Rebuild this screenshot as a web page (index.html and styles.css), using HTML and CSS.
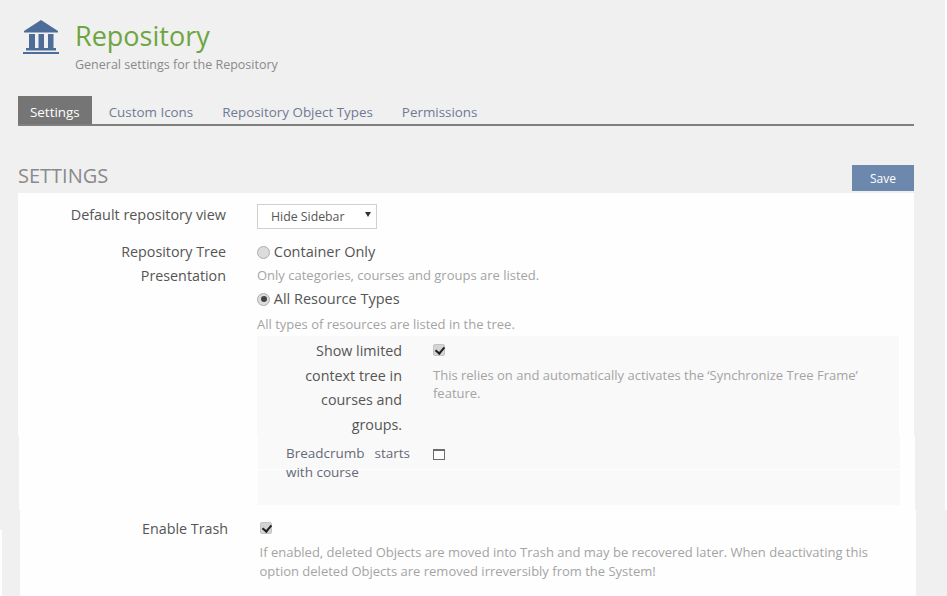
FILE: index.html
```html
<!DOCTYPE html>
<html lang="en">
<head>
<meta charset="utf-8">
<title>Repository</title>
<link rel="stylesheet" href="styles.css">
</head>
<body>
<div class="page">
  <header class="head">
    <svg class="logo" viewBox="0 0 36 34" aria-hidden="true">
      <path class="logo-fill" d="M18 0 35 11V12.500H1V11Z"/>
      <path class="logo-fill" d="M6 14h6v14H6zM15.500 14h5.500v14h-5.500zM25 14h5.500v14H25z"/>
      <path class="logo-fill" d="M3 28h30v2.500H3zM0 32h36v2.500H0z"/>
    </svg>
    <div class="head-text">
      <h1 class="title">Repository</h1>
      <p class="subtitle">General settings for the Repository</p>
    </div>
  </header>
  <nav class="tabs">
    <a class="tab tab-active">Settings</a>
    <a class="tab tab-first">Custom Icons</a>
    <a class="tab">Repository Object Types</a>
    <a class="tab">Permissions</a>
  </nav>
  <div class="section-head">
    <h2 class="section-title">SETTINGS</h2>
    <button class="save" type="button">Save</button>
  </div>
  <div class="edge"></div>
  <form class="panel">
    <div class="part part-a">
      <div class="row row-view">
        <label class="label">Default repository view</label>
        <div class="field">
          <span class="select-wrap">
            <select class="select"><option>Hide Sidebar</option></select>
          </span>
        </div>
      </div>
      <div class="row row-tree">
        <label class="label">Repository Tree Presentation</label>
        <div class="field">
          <label class="option"><input class="radio" type="radio" name="tree"> Container Only</label>
          <p class="hint hint-first">Only categories, courses and groups are listed.</p>
          <label class="option"><input class="radio" type="radio" name="tree" checked> All Resource Types</label>
          <p class="hint hint-second">All types of resources are listed in the tree.</p>
        </div>
      </div>
      <div class="sub sub-a">
        <div class="sub-row">
          <label class="sub-label">Show limited context tree in courses and groups.</label>
          <div class="sub-field">
            <input class="check" type="checkbox" checked>
            <p class="hint hint-sub">This relies on and automatically activates the ‘Synchronize Tree Frame’ feature.</p>
          </div>
        </div>
      </div>
    </div>
    <div class="part part-b">
      <div class="sub sub-b">
        <label class="crumb">Breadcrumb starts with course</label>
        <input class="check-empty" type="checkbox">
      </div>
    </div>
    <div class="part part-c">
      <div class="row row-trash">
        <label class="label">Enable Trash</label>
        <div class="field">
          <input class="check" type="checkbox" checked>
          <p class="hint hint-trash">If enabled, deleted Objects are moved into Trash and may be recovered later. When deactivating this option deleted Objects are removed irreversibly from the System!</p>
        </div>
      </div>
    </div>
  </form>
</div>
</body>
</html>
```
FILE: styles.css
```css
* { box-sizing: border-box; }
html, body { margin: 0; height: 100%; }
body {
  background: linear-gradient(#fff 510px, #f0f0f0 510px);
  font-family: "Open Sans", "Liberation Sans", sans-serif;
  overflow: hidden;
}
.page {
  position: relative;
  width: 945px;
  height: 596px;
  background: #f0f0f0;
  overflow: hidden;
  padding-left: 18px;
}
.page::before {
  content: "";
  position: absolute;
  left: 0;
  top: 530px;
  width: 2px;
  height: 66px;
  background: #fefefe;
}
.page::after {
  content: "";
  position: absolute;
  right: 0;
  top: 510px;
  width: 29px;
  height: 86px;
  background: #f0f0f0;
}
.head { display: flex; height: 96px; padding: 20px 0 0 5px; }
.logo { width: 36px; height: 34px; flex: none; }
.logo-fill { fill: #4d6d99; }
.head-text { margin: -1px 0 0 16px; }
.title {
  margin: 0;
  font-size: 27px;
  font-weight: 400;
  line-height: 34px;
  color: #6ea540;
}
.subtitle {
  margin: 3px 0 0;
  font-size: 12.500px;
  line-height: 18px;
  color: #8a8a8a;
}
.tabs {
  display: flex;
  width: 896px;
  height: 30px;
  border-bottom: 2px solid #808080;
}
.tab {
  padding: 0 14.500px;
  font-size: 13.400px;
  line-height: 32px;
  color: #6f7a94;
}
.tab-active {
  padding: 0 12px;
  background: #757575;
  color: #fff;
}
.tab-first { margin-left: 2.500px; }
.section-head {
  display: flex;
  justify-content: space-between;
  align-items: flex-end;
  width: 896px;
  height: 66px;
}
.section-title {
  margin: 0 0 3px;
  font-size: 20px;
  font-weight: 400;
  line-height: 27px;
  color: #8a8a8a;
}
.save {
  width: 62px;
  height: 26px;
  margin-bottom: 1px;
  padding: 1px 0 0;
  border: 0;
  background: #6d88ad;
  color: #fff;
  font: 400 12px/25px "Open Sans", "Liberation Sans", sans-serif;
}
.edge { height: 1px; }
.panel { width: 896px; }
.part { width: 896px; background: #fefefe; }
.part-a { height: 243px; padding-top: 11px; }
.row { display: flex; }
.label {
  width: 208px;
  flex: none;
  text-align: right;
  font-size: 14.300px;
  line-height: 24px;
  color: #555;
}
.field { margin-left: 31px; flex: 1; }
.row-view { height: 36px; }
.row-view .label { padding-left: 30px; font-size: 14.400px; line-height: 22px; }
.select-wrap { position: relative; display: block; width: 120px; height: 25px; }
.select-wrap::after {
  content: "";
  position: absolute;
  right: 6px;
  top: 8px;
  border-style: solid;
  border-width: 5px 3px 0;
  border-color: #333 transparent transparent;
}
.select {
  appearance: none;
  display: block;
  width: 120px;
  height: 25px;
  padding: 1px 0 0 13px;
  border: 1px solid #d0d0d0;
  border-radius: 0;
  background: #fff;
  color: #555;
  font: 400 12.300px/20px "Open Sans", "Liberation Sans", sans-serif;
}
.row-tree .label { padding-left: 90px; }
.option {
  display: flex;
  align-items: center;
  height: 24px;
  font-size: 14.500px;
  line-height: 24px;
  color: #555;
  white-space: pre;
}
.radio {
  appearance: none;
  position: relative;
  width: 13px;
  height: 13px;
  margin: 0;
  border: 1px solid #adadad;
  border-radius: 50%;
  background: #dcdcdc;
}
.radio:checked::after {
  content: "";
  position: absolute;
  left: 2.500px;
  top: 2.500px;
  width: 6px;
  height: 6px;
  border-radius: 50%;
  background: #444;
}
.hint { margin: 0; font-size: 13px; color: #a4a4a4; }
.hint-first { line-height: 23px; }
.hint-second { line-height: 26px; }
.sub { background: #f9f9f9; }
.sub-a { height: 100px; margin: -1px 15px 0 239px; }
.sub-row { display: flex; padding-top: 3px; }
.sub-label {
  width: 145px;
  flex: none;
  padding-left: 20px;
  text-align: right;
  font-size: 14.300px;
  line-height: 24.500px;
  color: #555;
}
.sub-field { margin-left: 31px; padding-top: 5px; }
.check {
  appearance: none;
  position: relative;
  display: block;
  width: 12px;
  height: 12px;
  margin: 0;
  border: 1px solid #c4c4c4;
  border-radius: 2px;
  background: #d4d4d4;
}
.check::after {
  content: "";
  position: absolute;
  left: 3px;
  top: 0;
  width: 4px;
  height: 7px;
  border: solid #222;
  border-width: 0 2px 2px 0;
  transform: rotate(40deg);
}
.hint-sub { margin-top: 10px; line-height: 18px; }
.part-b { height: 74px; margin-left: 1px; }
.sub-b {
  display: flex;
  height: 69px;
  margin: 0 15px 0 239px;
  padding: 8px 0 0 28px;
  background: linear-gradient(#f9f9f9 33px, #fff 33px, #fff 34px, #f9f9f9 34px);
}
.crumb {
  width: 124px;
  flex: none;
  text-align: justify;
  font-size: 13.500px;
  line-height: 19px;
  color: #666a78;
}
.check-empty {
  appearance: none;
  width: 12px;
  height: 11px;
  margin: 5px 0 0 23px;
  border: 1px solid #6f6a70;
  border-top-width: 2px;
  background: #fff;
}
.part-c { height: 90px; margin-left: 2px; padding-top: 6px; }
.row-trash .label { line-height: 26px; }
.row-trash .field { margin-left: 31.500px; padding-top: 6px; padding-right: 34px; }
.hint-trash { margin-top: 9px; line-height: 18.500px; }
```
